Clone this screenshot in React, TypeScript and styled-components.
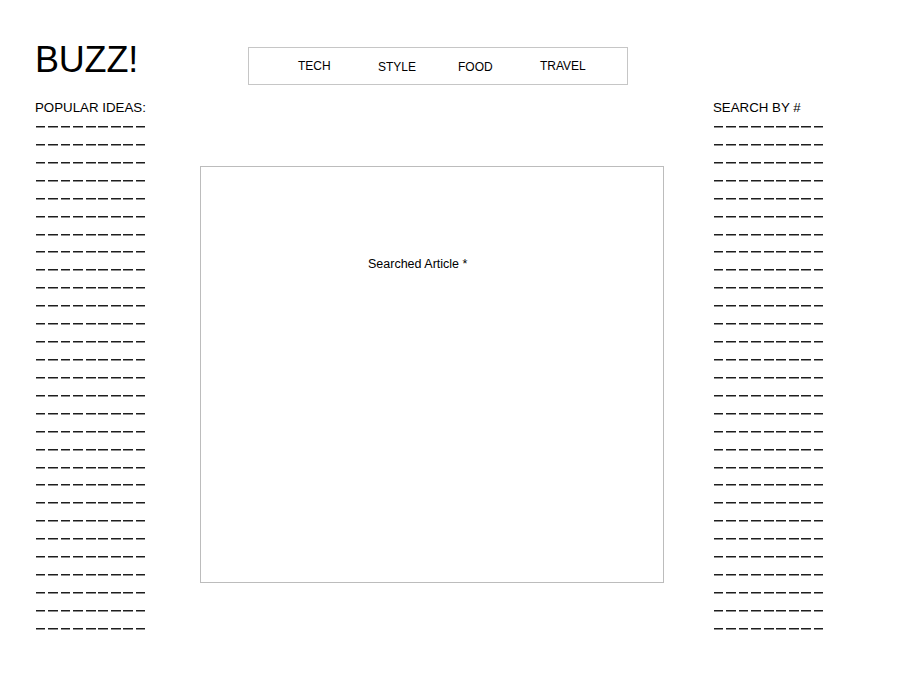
import React from "react";
import styled, { createGlobalStyle } from "styled-components";

const GlobalStyle = createGlobalStyle`
  html, body {
    margin: 0;
    padding: 0;
    background: #ffffff;
  }
  body {
    font-family: "Liberation Sans", Arial, Helvetica, sans-serif;
    color: #000;
  }
`;

const Page = styled.div`
  width: 917px;
  min-height: 685px;
  box-sizing: border-box;
  padding: 40px 0 0 35px;
`;

const Header = styled.header`
  display: grid;
  grid-template-columns: 213px 380px;
  align-items: start;
`;

const Logo = styled.h1`
  margin: 2px 0 0;
  font-size: 36px;
  line-height: 1;
  font-weight: 400;
  letter-spacing: -0.2px;
`;

const Nav = styled.nav`
  margin-top: 7px;
  height: 38px;
  box-sizing: border-box;
  border: 1px solid #c6c6c6;
  display: grid;
  grid-template-columns: 80px 80px 82px auto;
  align-items: center;
  padding-left: 49px;
`;

const NavItem = styled.a<{ $drop?: boolean }>`
  font-size: 12px;
  line-height: 14px;
  color: #000;
  text-decoration: none;
  position: relative;
  top: ${(p) => (p.$drop ? "1px" : "0")};
`;

const Body = styled.main`
  margin-top: 14px;
  display: grid;
  grid-template-columns: 165px 464px auto;
  align-items: start;
`;

const Sidebar = styled.aside<{ $offset?: number }>`
  display: flex;
  flex-direction: column;
  padding-left: ${(p) => p.$offset ?? 0}px;
`;

const SideTitle = styled.h2`
  margin: 0;
  font-size: 13.3px;
  line-height: 18px;
  font-weight: 400;
  white-space: nowrap;
`;

const DashList = styled.ul`
  list-style: none;
  margin: 0;
  padding: 0 0 0 1px;
  display: flex;
  flex-direction: column;
`;

const DashLine = styled.li`
  width: 110px;
  height: 17.93px;
  background-image: repeating-linear-gradient(
    to right,
    #1e1e1e 0,
    #1e1e1e 9.5px,
    transparent 9.5px,
    transparent 12.5px
  );
  background-size: 110px 1.5px;
  background-position: 0 9px;
  background-repeat: no-repeat;
`;

const ArticleBox = styled.section`
  margin-top: 67px;
  height: 417px;
  box-sizing: border-box;
  border: 1px solid #bcbcbc;
  padding: 90px 0 0 167px;
`;

const ArticleTitle = styled.p`
  margin: 0;
  font-size: 12.5px;
  line-height: 15px;
`;

const DASH_ROWS = 29;

function Dashes() {
  return (
    <DashList>
      {Array.from({ length: DASH_ROWS }, (_, i) => (
        <DashLine key={i} />
      ))}
    </DashList>
  );
}

export default function App() {
  return (
    <>
      <GlobalStyle />
      <Page>
        <Header>
          <Logo>BUZZ!</Logo>
          <Nav>
            <NavItem>TECH</NavItem>
            <NavItem $drop>STYLE</NavItem>
            <NavItem $drop>FOOD</NavItem>
            <NavItem>TRAVEL</NavItem>
          </Nav>
        </Header>
        <Body>
          <Sidebar>
            <SideTitle>POPULAR IDEAS:</SideTitle>
            <Dashes />
          </Sidebar>
          <ArticleBox>
            <ArticleTitle>Searched Article *</ArticleTitle>
          </ArticleBox>
          <Sidebar $offset={49}>
            <SideTitle>SEARCH BY #</SideTitle>
            <Dashes />
          </Sidebar>
        </Body>
      </Page>
    </>
  );
}
